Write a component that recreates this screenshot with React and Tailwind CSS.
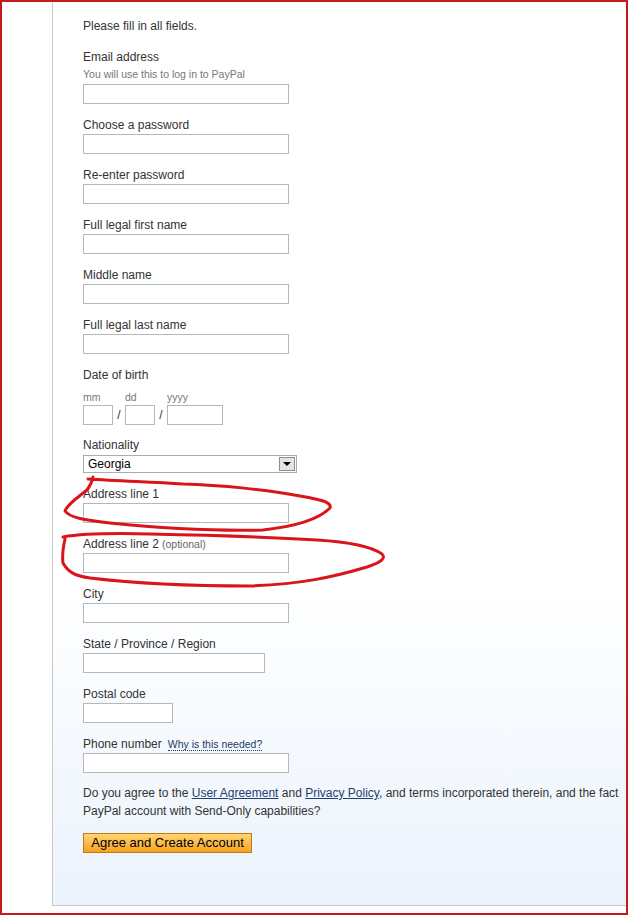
import React from "react";

const Field = ({ label, extra, hint, width = "w-[206px]" }) => (
  <div className="mb-[13px]">
    <div className="h-[17px] leading-[16px] text-[12px] text-[#333]">
      {label}
      {extra}
    </div>
    {hint && (
      <div className="mb-[2px] h-[16px] leading-[16px] text-[10.5px] text-[#777]">
        {hint}
      </div>
    )}
    <input
      className={`${width} block h-[20px] border border-[#b2b8be] bg-white outline-none`}
    />
  </div>
);

export default function App() {
  return (
    <div
      className="relative h-[915px] w-[628px] overflow-hidden border-2 border-[#c8191d] bg-white"
      style={{ fontFamily: '"Liberation Sans", Arial, sans-serif' }}
    >
      <div className="ml-[50px] h-[904px] overflow-hidden border-b border-l border-[#c6c9cc] bg-gradient-to-b from-white from-[65%] to-[#ebf3fc] pl-[30px] pt-[16px]">
        <p className="mb-[15px] h-[16px] leading-[16px] text-[12px] text-[#333]">
          Please fill in all fields.
        </p>

        <Field label="Email address" hint="You will use this to log in to PayPal" />
        <Field label="Choose a password" />
        <Field label="Re-enter password" />
        <Field label="Full legal first name" />
        <Field label="Middle name" />
        <Field label="Full legal last name" />

        {/* date of birth */}
        <div className="mb-[12px]">
          <div className="h-[17px] leading-[16px] text-[12px] text-[#333]">Date of birth</div>
          <div className="flex h-[21px] items-end pb-[1px] text-[10.5px] leading-[14px] text-[#777]">
            <span className="w-[42px]">mm</span>
            <span className="w-[42px]">dd</span>
            <span>yyyy</span>
          </div>
          <div className="flex items-center text-[12px] text-[#333]">
            <input className="block h-[20px] w-[30px] border border-[#b2b8be] bg-white outline-none" />
            <span className="w-[12px] text-center">/</span>
            <input className="block h-[20px] w-[30px] border border-[#b2b8be] bg-white outline-none" />
            <span className="w-[12px] text-center">/</span>
            <input className="block h-[20px] w-[56px] border border-[#b2b8be] bg-white outline-none" />
          </div>
        </div>

        {/* nationality */}
        <div className="mb-[13px]">
          <div className="h-[18px] leading-[16px] text-[12px] text-[#333]">Nationality</div>
          <div className="flex h-[18px] w-[214px] items-center justify-between border border-[#a7adb3] bg-white pl-[4px] pr-[1px]">
            <span className="text-[12px] text-black">Georgia</span>
            <span className="flex h-[14px] w-[16px] items-center justify-center border border-[#8c8c8c] bg-[#e4e4e4]">
              <span className="h-0 w-0 border-x-[4px] border-t-[4px] border-x-transparent border-t-black" />
            </span>
          </div>
        </div>

        <Field label="Address line 1" />
        <Field
          label="Address line 2"
          extra={<span className="text-[10.5px] text-[#666]"> (optional)</span>}
        />
        <Field label="City" />
        <Field label="State / Province / Region" width="w-[182px]" />
        <Field label="Postal code" width="w-[90px]" />
        <Field
          label="Phone number"
          extra={
            <span className="ml-[6px] border-b border-dotted border-[#1c3b66] text-[10.5px] text-[#1c3b66]">
              Why is this needed?
            </span>
          }
        />

        <div className="-mt-[2px] whitespace-nowrap text-[12px] leading-[18px] text-[#333]">
          <div>
            Do you agree to the{" "}
            <a className="text-[#1f3e6e] underline">User Agreement</a> and{" "}
            <a className="text-[#1f3e6e] underline">Privacy Policy</a>, and terms incorporated
            therein, and the fact
          </div>
          <div>PayPal account with Send-Only capabilities?</div>
        </div>

        <button className="mt-[13px] h-[20px] w-[169px] border border-[#c27a14] bg-gradient-to-b from-[#ffd46e] to-[#f5a11b] text-[13px] leading-[18px] text-black">
          Agree and Create Account
        </button>
      </div>

      {/* hand-drawn red marks */}
      <svg
        className="pointer-events-none absolute left-[-2px] top-[-2px]"
        width="628"
        height="915"
        fill="none"
        stroke="#d9141b"
        strokeWidth="3"
        strokeLinecap="round"
        strokeLinejoin="round"
      >
        <path d="M93 477 C 92 482, 90 486, 87 490 C 80 496, 68 503, 65 511 C 70 518, 85 520, 110 523 C 160 528, 220 531, 263 530 C 300 526, 320 518, 330 508 C 332 502, 322 500, 300 496 C 270 490, 220 485, 183 484 C 150 482, 120 481, 88 479" />
        <path d="M65 539 C 63 548, 62 556, 63 563 C 68 572, 75 576, 90 578 C 140 584, 200 586, 250 586 C 300 584, 330 578, 367 567 C 382 562, 386 558, 382 554 C 372 547, 350 542, 317 540 C 270 537, 200 535, 150 534 C 110 533, 80 534, 63 537" />
      </svg>
    </div>
  );
}
